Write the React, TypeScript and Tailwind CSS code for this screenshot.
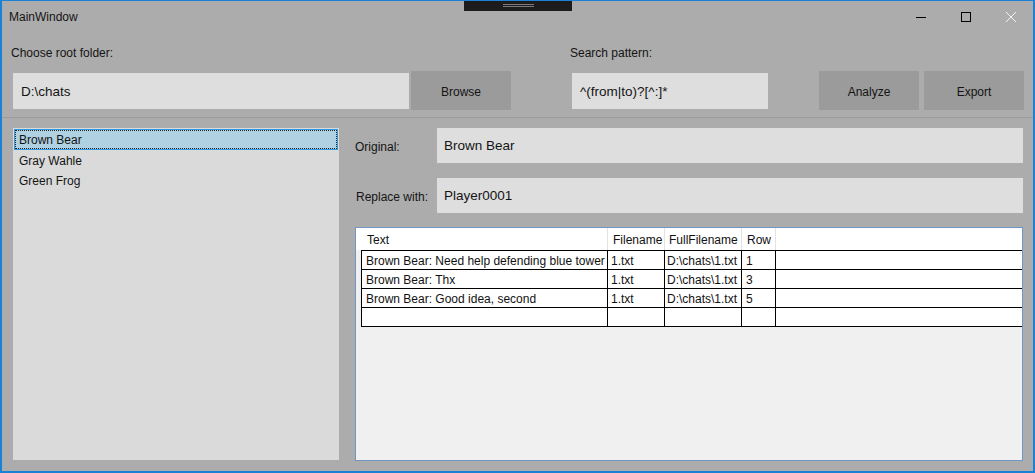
import React from 'react';

// =================================================================
// MAIN WINDOW (chat anonymizer)
// =================================================================

const rows = [
  { text: 'Brown Bear: Need help defending blue tower', file: '1.txt', full: 'D:\\chats\\1.txt', row: '1' },
  { text: 'Brown Bear: Thx', file: '1.txt', full: 'D:\\chats\\1.txt', row: '3' },
  { text: 'Brown Bear: Good idea, second', file: '1.txt', full: 'D:\\chats\\1.txt', row: '5' },
  { text: '', file: '', full: '', row: '' },
];

function CaptionButtons() {
  return (
    <div className="flex h-[31px]">
      <div className="w-[45px] flex items-center justify-center">
        <svg width="10" height="10" viewBox="0 0 10 10">
          <path d="M0 5.5 H10" stroke="#000" strokeWidth="1" />
        </svg>
      </div>
      <div className="w-[45px] flex items-center justify-center">
        <svg width="10" height="10" viewBox="0 0 10 10">
          <rect x="0.5" y="0.5" width="9" height="9" fill="none" stroke="#000" strokeWidth="1" />
        </svg>
      </div>
      <div className="w-[45px] flex items-center justify-center">
        <svg width="10" height="10" viewBox="0 0 10 10">
          <path d="M0 0 L10 10 M10 0 L0 10" stroke="#f4f4f4" strokeWidth="1" />
        </svg>
      </div>
    </div>
  );
}

function DataGrid() {
  return (
    <div className="mt-[14px] h-[234px] border border-[#7196c4] bg-[#f0f0f0] text-[12px] text-[#111]">
      {/* Header */}
      <div className="flex h-[22px] bg-white">
        <div className="w-[6px]" />
        <div className="w-[246px] border-r border-[#e3e3e3] pl-[5px] leading-[24px]">Text</div>
        <div className="w-[57px] border-r border-[#e3e3e3] pl-[5px] leading-[24px]">Filename</div>
        <div className="w-[77px] border-r border-[#e3e3e3] pl-[4px] leading-[24px]">FullFilename</div>
        <div className="w-[34px] border-r border-[#e3e3e3] pl-[5px] leading-[24px]">Row</div>
        <div className="flex-1" />
      </div>

      {/* Rows */}
      <div className="pl-[5px]">
        <div className="border-t border-l border-black">
          {rows.map((r, i) => (
            <div key={i} className="flex h-[19px] border-b border-black bg-white">
              <div className="w-[246px] border-r border-black pl-[4px] leading-[20px] whitespace-nowrap overflow-hidden">{r.text}</div>
              <div className="w-[57px] border-r border-black pl-[3px] leading-[20px]">{r.file}</div>
              <div className="w-[77px] border-r border-black pl-[2px] leading-[20px] whitespace-nowrap">{r.full}</div>
              <div className="w-[34px] border-r border-black pl-[4px] leading-[20px]">{r.row}</div>
              <div className="flex-1" />
            </div>
          ))}
        </div>
      </div>
    </div>
  );
}

export default function App() {
  return (
    <div
      className="relative w-[1035px] h-[473px] overflow-hidden bg-[#acacac] border-x-2 border-b-2 border-t border-[#1a82d6] text-[#141414] flex flex-col"
      style={{ fontFamily: '"Liberation Sans", Arial, sans-serif' }}
    >
      {/* Drag tab over the top edge */}
      <div className="absolute left-[462px] -top-px w-[108px] h-[11px] bg-[#1c1c1c] flex flex-col items-center pt-[4px] gap-[1px]">
        <div className="w-[31px] h-px bg-[#7a7a7a]" />
        <div className="w-[31px] h-px bg-[#7a7a7a]" />
      </div>

      {/* Title bar */}
      <div className="flex h-[31px] shrink-0 items-center justify-between">
        <span className="pl-[7px] text-[12px] leading-[16px]">MainWindow</span>
        <CaptionButtons />
      </div>

      {/* Top controls */}
      <div className="flex pl-[9px] mt-[12px] shrink-0 text-[12px]">
        <div className="w-[500px] flex flex-col">
          <div className="h-[16px] leading-[18px]">Choose root folder:</div>
          <div className="flex h-[39px] mt-[11px]">
            <div className="ml-[2px] mt-[2px] w-[396px] h-[36px] bg-[#dedede] pl-[8px] pt-[2px] flex items-center text-[13.5px]">D:\chats</div>
            <div className="ml-[2px] w-[100px] h-[39px] bg-[#9b9b9b] pt-[2px] flex items-center justify-center">Browse</div>
          </div>
        </div>
        <div className="ml-[59px] flex flex-col">
          <div className="h-[16px] leading-[18px]">Search pattern:</div>
          <div className="flex h-[39px] mt-[11px]">
            <div className="ml-[2px] mt-[2px] w-[196px] h-[36px] bg-[#dedede] pl-[8px] pt-[2px] flex items-center text-[13.5px]">^(from|to)?[^:]*</div>
            <div className="ml-[51px] w-[100px] h-[39px] bg-[#9b9b9b] pt-[2px] flex items-center justify-center">Analyze</div>
            <div className="ml-[5px] w-[100px] h-[39px] bg-[#9b9b9b] pt-[2px] flex items-center justify-center">Export</div>
          </div>
        </div>
      </div>

      {/* Separator */}
      <div className="mt-[7px] h-px bg-[#9c9c9c] shrink-0" />

      {/* Bottom area */}
      <div className="flex pl-[11px] pr-[10px] text-[12px]">
        {/* Names list */}
        <div className="mt-[10px] w-[326px] h-[332px] bg-[#dadada] px-px pt-px">
          <div className="h-[21px] bg-[#b0d1e1] border border-[#2f9ae0] p-px">
            <div className="h-full outline-1 outline-dotted outline-[#222] pl-[3px] leading-[19px]">Brown Bear</div>
          </div>
          <div className="h-[20px] pl-[5px] leading-[22px]">Gray Wahle</div>
          <div className="h-[20px] pl-[5px] leading-[22px]">Green Frog</div>
        </div>

        {/* Details */}
        <div className="ml-[16px] flex-1 flex flex-col">
          <div className="mt-[10px] flex h-[35px] items-center">
            <div className="w-[82px] pt-[2px]">Original:</div>
            <div className="flex-1 h-full bg-[#dedede] pl-[7px] pt-[2px] flex items-center text-[13.5px]">Brown Bear</div>
          </div>
          <div className="mt-[15px] flex h-[35px] items-center">
            <div className="w-[82px] pl-px pt-[2px]">Replace with:</div>
            <div className="flex-1 h-full bg-[#dedede] pl-[7px] pt-[2px] flex items-center text-[13.5px]">Player0001</div>
          </div>
          <DataGrid />
        </div>
      </div>
    </div>
  );
}
